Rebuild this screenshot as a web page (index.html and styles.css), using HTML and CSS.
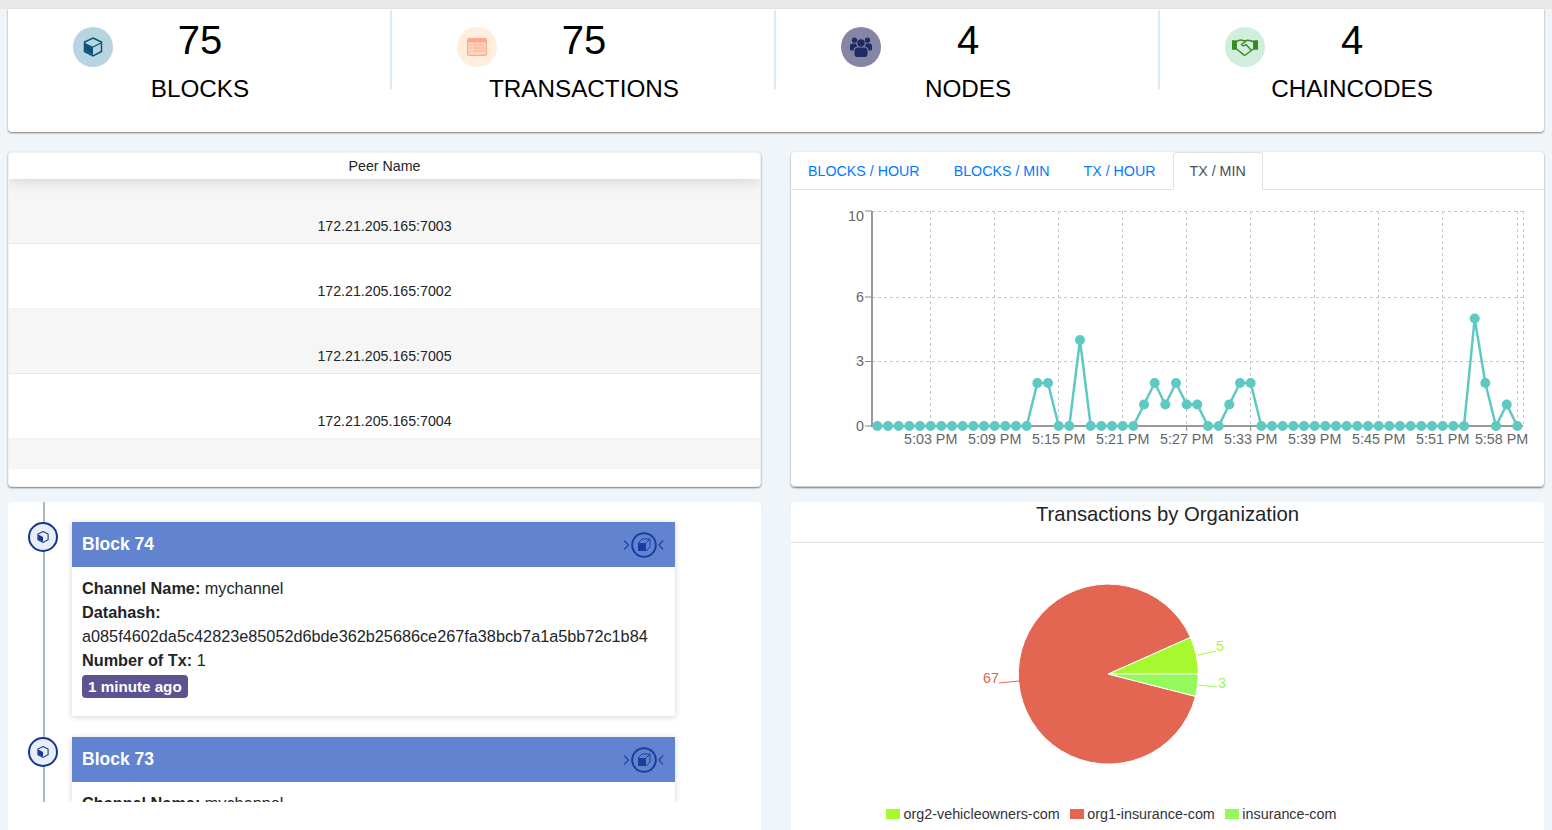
FILE: index.html
```html
<!DOCTYPE html>
<html lang="en">
<head>
<meta charset="UTF-8">
<title>Dashboard</title>
<link rel="stylesheet" href="styles.css">
</head>
<body>
  <div class="top-strip"></div>

  <div class="card stats">
    <div class="stat">
      <span class="stat-icon icon-blocks">
        <svg width="20" height="20" viewBox="0 0 20 20"><path d="M10 1 L18.5 5 V14.5 L10 19 L1.5 14.5 V5 Z" fill="none" stroke="#0b5476" stroke-width="1.5"/><path d="M2 6 L10 9.8 V18 L2 14 Z" fill="#0b5476"/><path d="M10 10 L18 6" stroke="#0b5476" stroke-width="1.3"/></svg>
      </span>
      <div class="stat-text"><div class="stat-num">75</div><div class="stat-label">BLOCKS</div></div>
    </div>
    <div class="stat">
      <span class="stat-icon icon-tx">
        <svg width="20" height="18" viewBox="0 0 20 18"><rect width="20" height="18" rx="2" fill="#ffa98c"/><rect x="1.2" y="4.5" width="17.6" height="12.3" fill="#ffd5c0"/><path d="M2.5 7 H4.5 M6 7 H17.5 M2.5 10 H4.5 M6 10 H17.5 M2.5 13 H4.5 M6 13 H17.5" stroke="#ffa98c" stroke-width="1.2"/></svg>
      </span>
      <div class="stat-text"><div class="stat-num">75</div><div class="stat-label">TRANSACTIONS</div></div>
    </div>
    <div class="stat">
      <span class="stat-icon icon-nodes">
        <svg width="22" height="20" viewBox="0 0 22 20" fill="#1f2a63"><circle cx="11" cy="6" r="3.8"/><circle cx="4.5" cy="3.2" r="2.6"/><circle cx="17.5" cy="3.2" r="2.6"/><path d="M4.5 14 Q4.5 10.5 8 10.5 H14 Q17.5 10.5 17.5 14 V17 Q17.5 20 14.5 20 H7.5 Q4.5 20 4.5 17 Z"/><path d="M0 9 Q0 6.5 2.5 6.5 H6 Q6.2 8.5 7.5 9.6 Q3.6 10 3.6 13.5 H1.5 Q0 13.5 0 12 Z"/><path d="M22 9 Q22 6.5 19.5 6.5 H16 Q15.8 8.5 14.5 9.6 Q18.4 10 18.4 13.5 H20.5 Q22 13.5 22 12 Z"/></svg>
      </span>
      <div class="stat-text"><div class="stat-num">4</div><div class="stat-label">NODES</div></div>
    </div>
    <div class="stat">
      <span class="stat-icon icon-code">
        <svg width="26" height="18" viewBox="0 0 26 18" fill="none" stroke="#3b8a22" stroke-width="1.4"><path d="M0 3 H4 V11 H0 Z" fill="#3b8a22"/><path d="M22 3 H26 V11 H22 Z" fill="#3b8a22"/><path d="M4 4 Q8 1 11 2.5 L13 3 Q16 1 22 4 V10.5 L13.8 16.8 Q12.6 17.6 11.4 16.6 L4 10.5 Z"/><path d="M14.5 2.8 L9.5 6.5 Q11 9 14 6.5 L19 12"/></svg>
      </span>
      <div class="stat-text"><div class="stat-num">4</div><div class="stat-label">CHAINCODES</div></div>
    </div>
  </div>

  <div class="dash-grid">
    <div class="card peers">
      <div class="peers-head">Peer Name</div>
      <div class="peer-row odd">172.21.205.165:7003</div>
      <div class="peer-row">172.21.205.165:7002</div>
      <div class="peer-row odd">172.21.205.165:7005</div>
      <div class="peer-row">172.21.205.165:7004</div>
      <div class="peer-row odd empty"></div>
    </div>

    <div class="card chart-card">
      <ul class="tabs">
        <li class="tab">BLOCKS / HOUR</li>
        <li class="tab">BLOCKS / MIN</li>
        <li class="tab">TX / HOUR</li>
        <li class="tab active">TX / MIN</li>
      </ul>
      <svg class="line-chart" width="753" height="296" viewBox="791 190 753 296">
        <g class="grid">
          <path d="M872 211 H1523 M872 297 H1523 M872 361.5 H1523"/>
          <path d="M930.7 211 V426 M994.7 211 V426 M1058.7 211 V426 M1122.7 211 V426 M1186.7 211 V426 M1250.7 211 V426 M1314.7 211 V426 M1378.7 211 V426 M1442.7 211 V426 M1517.3 211 V426 M1523 211 V426"/>
        </g>
        <path class="axis" d="M872 211 V426 H1523"/>
        <path class="ticks" d="M865 211 H872 M865 297 H872 M865 361.5 H872 M865 426 H872 M930.7 426 V431 M994.7 426 V431 M1058.7 426 V431 M1122.7 426 V431 M1186.7 426 V431 M1250.7 426 V431 M1314.7 426 V431 M1378.7 426 V431 M1442.7 426 V431 M1517.3 426 V431"/>
        <g class="y-labels">
          <text x="864" y="221">10</text>
          <text x="864" y="302">6</text>
          <text x="864" y="366">3</text>
          <text x="864" y="431">0</text>
        </g>
        <g class="x-labels">
          <text x="930.7" y="444">5:03 PM</text>
          <text x="994.7" y="444">5:09 PM</text>
          <text x="1058.7" y="444">5:15 PM</text>
          <text x="1122.7" y="444">5:21 PM</text>
          <text x="1186.7" y="444">5:27 PM</text>
          <text x="1250.7" y="444">5:33 PM</text>
          <text x="1314.7" y="444">5:39 PM</text>
          <text x="1378.7" y="444">5:45 PM</text>
          <text x="1442.7" y="444">5:51 PM</text>
          <text x="1501.5" y="444">5:58 PM</text>
        </g>
        <polyline class="series" points="877.3,426 1026.7,426 1037.3,383 1048,383 1058.7,426 1069.3,426 1080,340 1090.7,426 1133.3,426 1144,404.5 1154.7,383 1165.3,404.5 1176,383 1186.7,404.5 1197.3,404.5 1208,426 1218.7,426 1229.3,404.5 1240,383 1250.7,383 1261.3,426 1464,426 1474.7,318.5 1485.3,383 1496,426 1506.7,404.5 1517.3,426"/>
        <g class="dots">
          <circle cx="877.3" cy="426" r="5"/><circle cx="888" cy="426" r="5"/><circle cx="898.7" cy="426" r="5"/><circle cx="909.3" cy="426" r="5"/><circle cx="920" cy="426" r="5"/>
          <circle cx="930.7" cy="426" r="5"/><circle cx="941.3" cy="426" r="5"/><circle cx="952" cy="426" r="5"/><circle cx="962.7" cy="426" r="5"/><circle cx="973.3" cy="426" r="5"/>
          <circle cx="984" cy="426" r="5"/><circle cx="994.7" cy="426" r="5"/><circle cx="1005.3" cy="426" r="5"/><circle cx="1016" cy="426" r="5"/><circle cx="1026.7" cy="426" r="5"/>
          <circle cx="1037.3" cy="383" r="5"/><circle cx="1048" cy="383" r="5"/><circle cx="1058.7" cy="426" r="5"/><circle cx="1069.3" cy="426" r="5"/><circle cx="1080" cy="340" r="5"/>
          <circle cx="1090.7" cy="426" r="5"/><circle cx="1101.3" cy="426" r="5"/><circle cx="1112" cy="426" r="5"/><circle cx="1122.7" cy="426" r="5"/><circle cx="1133.3" cy="426" r="5"/>
          <circle cx="1144" cy="404.5" r="5"/><circle cx="1154.7" cy="383" r="5"/><circle cx="1165.3" cy="404.5" r="5"/><circle cx="1176" cy="383" r="5"/><circle cx="1186.7" cy="404.5" r="5"/>
          <circle cx="1197.3" cy="404.5" r="5"/><circle cx="1208" cy="426" r="5"/><circle cx="1218.7" cy="426" r="5"/><circle cx="1229.3" cy="404.5" r="5"/><circle cx="1240" cy="383" r="5"/>
          <circle cx="1250.7" cy="383" r="5"/><circle cx="1261.3" cy="426" r="5"/><circle cx="1272" cy="426" r="5"/><circle cx="1282.7" cy="426" r="5"/><circle cx="1293.3" cy="426" r="5"/>
          <circle cx="1304" cy="426" r="5"/><circle cx="1314.7" cy="426" r="5"/><circle cx="1325.3" cy="426" r="5"/><circle cx="1336" cy="426" r="5"/><circle cx="1346.7" cy="426" r="5"/>
          <circle cx="1357.3" cy="426" r="5"/><circle cx="1368" cy="426" r="5"/><circle cx="1378.7" cy="426" r="5"/><circle cx="1389.3" cy="426" r="5"/><circle cx="1400" cy="426" r="5"/>
          <circle cx="1410.7" cy="426" r="5"/><circle cx="1421.3" cy="426" r="5"/><circle cx="1432" cy="426" r="5"/><circle cx="1442.7" cy="426" r="5"/><circle cx="1453.3" cy="426" r="5"/>
          <circle cx="1464" cy="426" r="5"/><circle cx="1474.7" cy="318.5" r="5"/><circle cx="1485.3" cy="383" r="5"/><circle cx="1496" cy="426" r="5"/><circle cx="1506.7" cy="404.5" r="5"/>
          <circle cx="1517.3" cy="426" r="5"/>
        </g>
      </svg>
    </div>

    <div class="card blocks">
      <div class="timeline">
        <div class="tl-item">
          <span class="tl-badge">
            <svg width="12" height="12" viewBox="0 0 20 20"><path d="M10 1 L18.5 5 V14.5 L10 19 L1.5 14.5 V5 Z" fill="none" stroke="#173592" stroke-width="1.8"/><path d="M2 6 L10 9.8 V18 L2 14 Z" fill="#173592"/></svg>
          </span>
          <div class="tl-panel">
            <div class="tl-head">
              <span class="tl-title">Block 74</span>
              <svg class="tl-mark" width="42" height="26" viewBox="0 0 42 26"><path d="M1 8.5 L5.5 13 L1 17.5 M40 8.5 L36 13 L40 17.5" fill="none" stroke="#1f449f" stroke-width="1.2"/><circle cx="21" cy="13" r="11.8" fill="none" stroke="#173f9e" stroke-width="2"/><path d="M15 11 H23 V19 H15 Z" fill="#173f9e"/><path d="M15 11 L19 7 H27 V15 L23 19 M23 11 L27 7" fill="none" stroke="#173f9e" stroke-width="1"/></svg>
            </div>
            <div class="tl-body">
              <div><b>Channel Name:</b> mychannel</div>
              <div><b>Datahash:</b></div>
              <div>a085f4602da5c42823e85052d6bde362b25686ce267fa38bcb7a1a5bb72c1b84</div>
              <div><b>Number of Tx:</b> 1</div>
              <span class="time-badge">1 minute ago</span>
            </div>
          </div>
        </div>
        <div class="tl-item">
          <span class="tl-badge">
            <svg width="12" height="12" viewBox="0 0 20 20"><path d="M10 1 L18.5 5 V14.5 L10 19 L1.5 14.5 V5 Z" fill="none" stroke="#173592" stroke-width="1.8"/><path d="M2 6 L10 9.8 V18 L2 14 Z" fill="#173592"/></svg>
          </span>
          <div class="tl-panel">
            <div class="tl-head">
              <span class="tl-title">Block 73</span>
              <svg class="tl-mark" width="42" height="26" viewBox="0 0 42 26"><path d="M1 8.5 L5.5 13 L1 17.5 M40 8.5 L36 13 L40 17.5" fill="none" stroke="#1f449f" stroke-width="1.2"/><circle cx="21" cy="13" r="11.8" fill="none" stroke="#173f9e" stroke-width="2"/><path d="M15 11 H23 V19 H15 Z" fill="#173f9e"/><path d="M15 11 L19 7 H27 V15 L23 19 M23 11 L27 7" fill="none" stroke="#173f9e" stroke-width="1"/></svg>
            </div>
            <div class="tl-body">
              <div><b>Channel Name:</b> mychannel</div>
            </div>
          </div>
        </div>
      </div>
    </div>

    <div class="card org-card">
      <div class="org-title">Transactions by Organization</div>
      <svg class="pie" width="600" height="260" viewBox="808 543 600 260">
        <path d="M1108.3 674 L1190.5 637.4 A90 90 0 1 0 1195.5 696.4 Z" fill="#e26651" stroke="#fff"/>
        <path d="M1108.3 674 L1198.3 674 A90 90 0 0 0 1190.5 637.4 Z" fill="#a7f92f" stroke="#fff"/>
        <path d="M1108.3 674 L1195.5 696.4 A90 90 0 0 0 1198.3 674 Z" fill="#95f85c" stroke="#fff"/>
        <path d="M1198 655 L1216 651" stroke="#a7f92f" fill="none"/>
        <path d="M1198 685 L1217 687" stroke="#95f85c" fill="none"/>
        <path d="M999 683 L1019 681" stroke="#e26651" fill="none"/>
        <text class="pie-label" x="1216" y="651" fill="#a7f92f">5</text>
        <text class="pie-label" x="1218" y="688" fill="#95f85c">3</text>
        <text class="pie-label" x="983" y="683" fill="#e26651">67</text>
      </svg>
      <div class="legend">
        <span class="legend-item"><i class="swatch swatch-org2"></i>org2-vehicleowners-com</span>
        <span class="legend-item"><i class="swatch swatch-org1"></i>org1-insurance-com</span>
        <span class="legend-item"><i class="swatch swatch-ins"></i>insurance-com</span>
      </div>
    </div>
  </div>
</body>
</html>
```

FILE: styles.css
```css
html, body {
  height: 830px;
  overflow: hidden;
}
body {
  margin: 0;
  padding: 0 8px;
  background-color: #f0f5f9;
  font-family: "Liberation Sans", Arial, sans-serif;
  color: #212529;
}
.top-strip {
  height: 9px;
  margin: 0 -8px;
  background-color: #e8e8e8;
}
.card {
  background-color: #fff;
  border-radius: 4px;
  box-shadow: 0 1px 2px rgba(0, 0, 0, 0.5);
}

/* stats */
.stats {
  display: grid;
  grid-template-columns: repeat(4, 1fr);
  height: 123px;
  border-top-left-radius: 0;
  border-top-right-radius: 0;
}
.stat {
  display: grid;
  height: 79px;
  margin-top: 1px;
  box-shadow: inset -2px 0 0 #dcebf8;
  text-align: center;
  color: #000;
}
.stat:last-child {
  box-shadow: none;
}
.stat-icon {
  grid-area: 1 / 1;
  justify-self: start;
  display: flex;
  align-items: center;
  justify-content: center;
  width: 40px;
  height: 40px;
  margin: 17px 0 0 65px;
  border-radius: 50%;
}
.icon-blocks { background-color: #b8d4e1; }
.icon-tx { background-color: #ffeedd; }
.icon-nodes { background-color: #8586a5; }
.icon-code { background-color: #cfeedb; }
.stat-text {
  grid-area: 1 / 1;
}
.stat-num {
  margin-top: 7px;
  font-size: 40px;
  line-height: 46px;
}
.stat-label {
  margin-top: 12px;
  font-size: 24.25px;
  line-height: 28px;
}

/* grid of the four panels */
.dash-grid {
  display: grid;
  grid-template-columns: 753px 753px;
  grid-template-rows: 335px 340px;
  column-gap: 30px;
  row-gap: 15px;
  margin-top: 20px;
}

/* peers table */
.peers {
  box-sizing: border-box;
  border: 1px solid rgba(0, 0, 0, 0.05);
  overflow: hidden;
  font-size: 14.2px;
  text-align: center;
}
.peers-head {
  position: relative;
  height: 26px;
  line-height: 26px;
  box-shadow: 0 2px 15px rgba(0, 0, 0, 0.15);
}
.peer-row {
  display: flex;
  align-items: flex-end;
  justify-content: center;
  box-sizing: border-box;
  height: 65px;
  padding-bottom: 9px;
  border-bottom: 1px solid rgba(0, 0, 0, 0.05);
}
.peer-row.odd {
  background-color: #f6f6f6;
}
.peer-row.empty {
  height: 30px;
  border-bottom: none;
}

/* chart */
.chart-card {
  box-shadow: 0 1px 2px rgba(0, 0, 0, 0.5), inset 0 -1px 0 #ccc;
}
.tabs {
  display: flex;
  margin: 0;
  padding: 0;
  list-style: none;
  border-bottom: 1px solid #dee2e6;
}
.tab {
  margin-bottom: -1px;
  padding: 8px 16px;
  border: 1px solid transparent;
  font-size: 14.25px;
  line-height: 20px;
  color: #007bff;
}
.tab.active {
  border-color: #dee2e6 #dee2e6 #fff;
  border-radius: 4px 4px 0 0;
  background-color: #fff;
  color: #495057;
}
.line-chart {
  display: block;
}
.grid path {
  fill: none;
  stroke: #c8c8c8;
  stroke-dasharray: 3 3;
  shape-rendering: crispEdges;
}
.axis {
  fill: none;
  stroke: #999;
  stroke-width: 2;
}
.ticks {
  fill: none;
  stroke: #888;
}
.y-labels text,
.x-labels text {
  font-size: 14.3px;
  fill: #666;
}
.y-labels text {
  text-anchor: end;
}
.x-labels text {
  text-anchor: middle;
}
.series {
  fill: none;
  stroke: #5ec9c2;
  stroke-width: 2.5;
}
.dots circle {
  fill: #5ec9c2;
}

/* block timeline */
.blocks {
  border-bottom-left-radius: 0;
  border-bottom-right-radius: 0;
  box-shadow: none;
}
.timeline {
  position: relative;
  display: flex;
  flex-direction: column;
  gap: 21px;
  height: 300px;
  box-sizing: border-box;
  padding: 20px 0 0 20px;
  overflow: hidden;
}
.timeline::before {
  content: "";
  position: absolute;
  top: 0;
  bottom: 0;
  left: 35px;
  width: 2px;
  background-color: #a9b8c4;
}
.tl-item {
  display: flex;
  gap: 14px;
  align-items: flex-start;
}
.tl-badge {
  position: relative;
  display: flex;
  align-items: center;
  justify-content: center;
  flex: none;
  box-sizing: border-box;
  width: 30px;
  height: 30px;
  border: 2px solid #173592;
  border-radius: 50%;
  background-color: #e8eef8;
}
.tl-panel {
  position: relative;
  flex: none;
  width: 603px;
  box-shadow: 0 1px 6px rgba(0, 0, 0, 0.175);
}
.tl-head {
  display: flex;
  align-items: center;
  justify-content: space-between;
  height: 45px;
  padding: 0 10px;
  background-color: #6283d0;
}
.tl-title {
  font-size: 17.5px;
  font-weight: bold;
  color: #fff;
}
.tl-body {
  padding: 9px 10px 18px;
  font-size: 16.25px;
  line-height: 24px;
}
.time-badge {
  display: inline-block;
  margin-top: 3px;
  padding: 0 6px;
  border-radius: 4px;
  background-color: #5c5391;
  font-size: 15.2px;
  font-weight: bold;
  line-height: 23px;
  color: #fff;
  vertical-align: top;
}

/* organization pie */
.org-card {
  border-bottom-left-radius: 0;
  border-bottom-right-radius: 0;
  box-shadow: none;
}
.org-title {
  height: 40px;
  border-bottom: 1px solid rgba(0, 0, 0, 0.125);
  font-size: 20.3px;
  line-height: 25px;
  text-align: center;
}
.pie {
  display: block;
  margin-left: 17px;
}
.pie-label {
  font-size: 14.3px;
}
.legend {
  display: flex;
  gap: 10px;
  margin: 3px 0 0 95px;
  font-size: 14.35px;
  line-height: 16px;
  color: #333;
}
.legend-item {
  display: flex;
  align-items: center;
  gap: 3.5px;
}
.swatch {
  width: 14px;
  height: 10px;
}
.swatch-org2 { background-color: #a7f92f; }
.swatch-org1 { background-color: #e26651; }
.swatch-ins { background-color: #95f85c; }
```
